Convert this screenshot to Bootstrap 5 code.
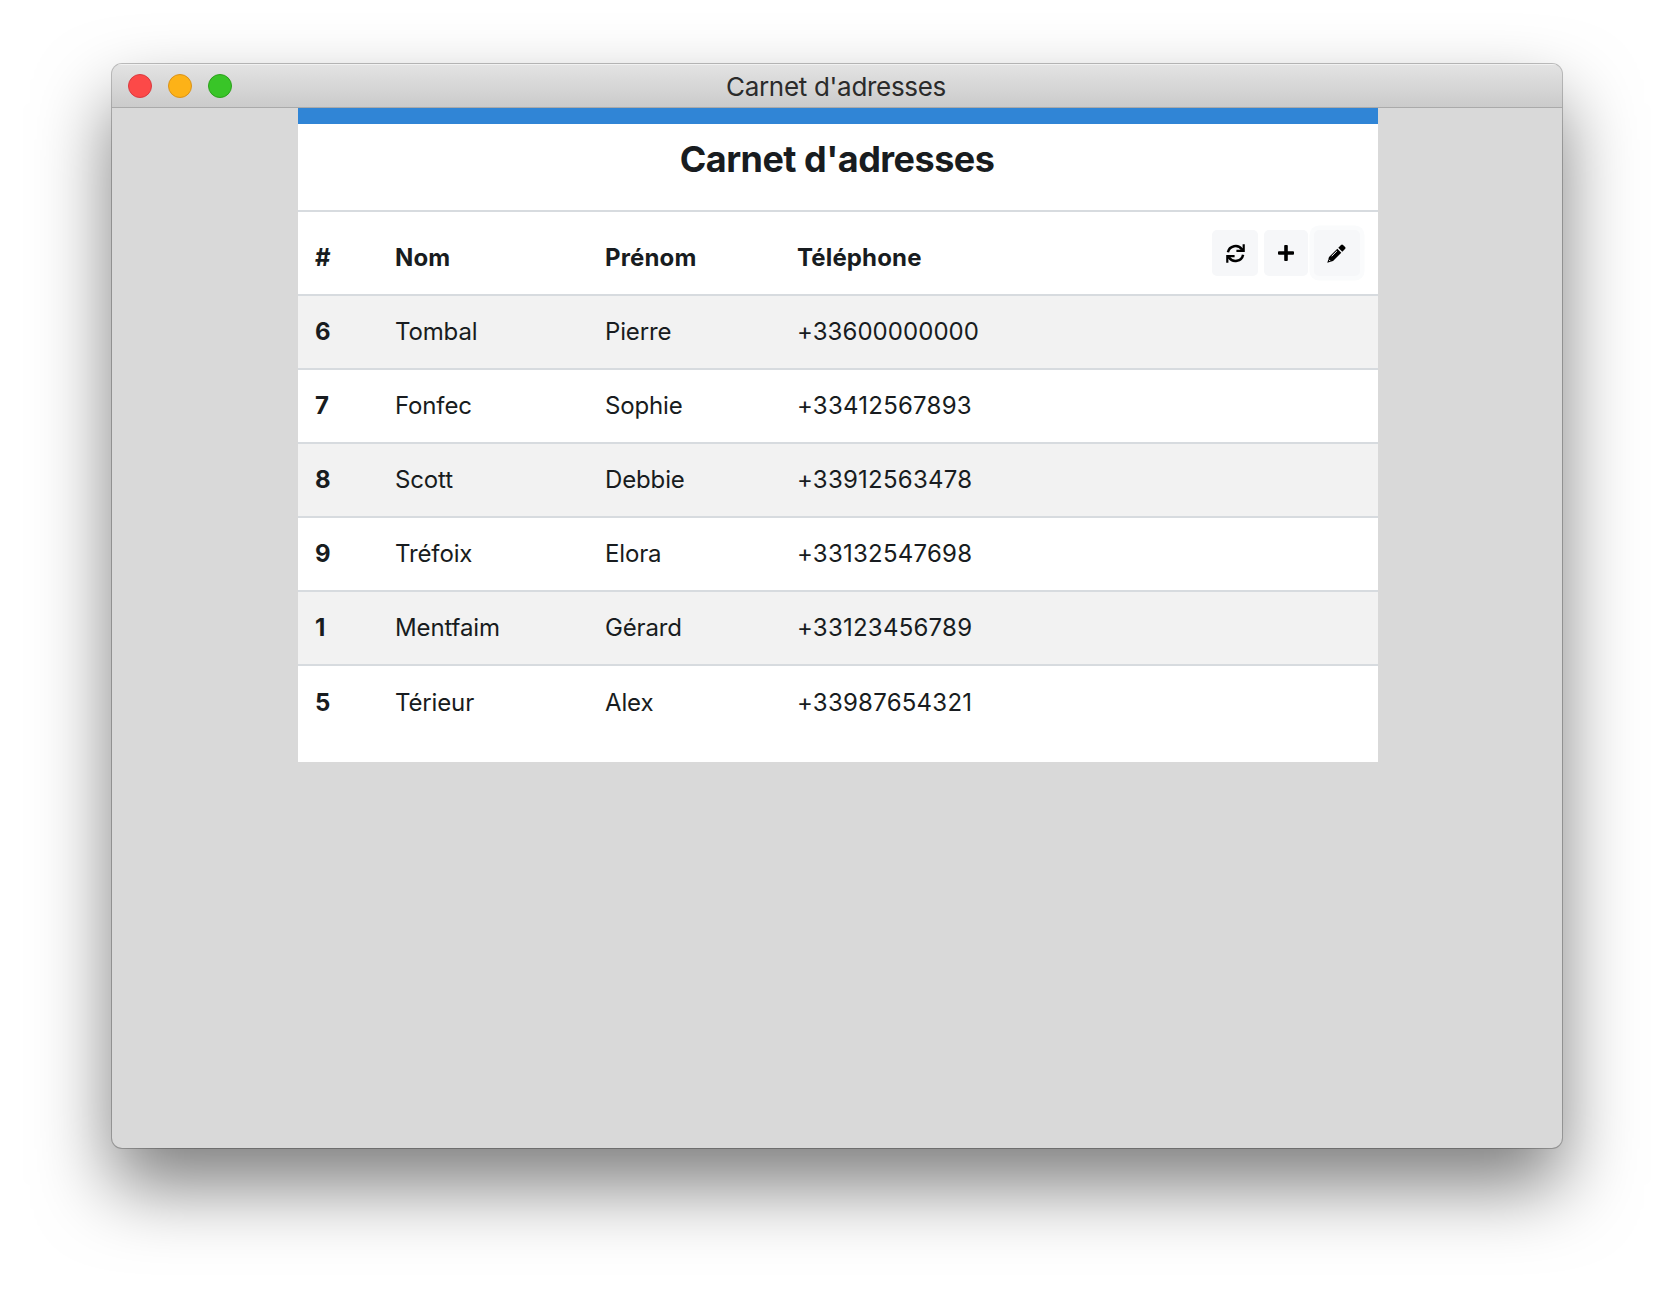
<!DOCTYPE html>
<html lang="fr">
<head>
<meta charset="utf-8">
<title>Carnet d'adresses</title>
<link href="https://cdn.jsdelivr.net/npm/bootstrap@5.3.0/dist/css/bootstrap.min.css" rel="stylesheet">
<style>
body { font-family: Inter, "Liberation Sans", sans-serif; background: #fff; color: #181c20; height: 1308px; overflow: hidden; padding: 64px 112px 0; }
.app-window { width: 1450px; height: 1084px; border-radius: 10px; background: #d9d9d9; box-shadow: 0 0 0 1px rgba(0,0,0,.24), 0 38px 74px rgba(0,0,0,.51); }
.title-bar { height: 44px; padding-left: 16px; background: linear-gradient(#e3e3e3, #cbcbcb); border-bottom: 1px solid #aaa; box-shadow: inset 0 1px 0 #f1f1f1; }
.title-bar .lights { gap: 16px; width: 160px; }
.light-dot { width: 24px; height: 24px; border-radius: 50%; border: 1px solid; }
.dot-close { background: #fc4948; border-color: #d93a40; }
.dot-min { background: #fdb217; border-color: #d9921a; }
.dot-max { background: #39c528; border-color: #2ca01c; }
.window-title { font-size: 26px; color: #2b2b2b; letter-spacing: -.3px; line-height: 42px; padding: 2px 178px 0 0; }
.book { width: 1080px; height: 654px; margin-left: 186px; border-top: 16px solid #3085d6; }
.book-title { height: 86px; padding: 13px 2px 0 0; font-size: 36px; font-weight: 700; line-height: 44px; letter-spacing: -.53px; }
.book-table { table-layout: fixed; font-size: 24px; line-height: 36px; --bs-table-color: #181c20; --bs-table-striped-color: #181c20; --bs-table-striped-bg: #f2f2f2; }
.book-table > * > tr > * { height: 74px; padding: 18px 0 18px 17px; border-bottom: 0; border-top: 2px solid #d7dbdf; letter-spacing: -.14px; vertical-align: middle; }
.book-table > * > tr > .phone { letter-spacing: .24px; }
.book-table > tbody > tr:first-child > .phone { letter-spacing: .06px; }
.book-table > thead > tr > * { height: 84px; padding-top: 28px; padding-bottom: 18px; letter-spacing: .15px; }
.book-table > thead > tr > .tools-cell { padding: 18px 18px 18px 0; }
.tool-btn { width: 46px; height: 46px; padding: 0; border: 0; border-radius: 5px; background: #f6f7f9; color: #000; }
.tool-btn.add { width: 44px; margin: 0 6px; }
.tool-btn.focused { padding-right: 2px; box-shadow: 0 0 0 4.5px #fafbfc; }
</style>
<script src="https://cdn.jsdelivr.net/npm/bootstrap@5.3.0/dist/js/bootstrap.bundle.min.js"></script>
</head>
<body>
<main class="app-window overflow-hidden">
  <header class="title-bar d-flex align-items-center">
    <div class="lights d-flex flex-shrink-0"><span class="light-dot dot-close"></span><span class="light-dot dot-min"></span><span class="light-dot dot-max"></span></div>
    <div class="window-title flex-grow-1 text-center">Carnet d'adresses</div>
  </header>
  <section class="book bg-white">
    <h1 class="book-title text-center mb-0">Carnet d'adresses</h1>
    <table class="table table-striped book-table m-0">
      <colgroup><col style="width:80px"><col style="width:210px"><col style="width:192px"><col style="width:300px"><col></colgroup>
      <thead><tr><th>#</th><th>Nom</th><th>Prénom</th><th>Téléphone</th>
        <th class="tools-cell"><div class="d-flex justify-content-end">
          <button class="btn tool-btn d-flex align-items-center justify-content-center" aria-label="Actualiser"><svg width="19" height="19" viewBox="0 0 19 19" fill="none" stroke="currentColor" stroke-width="2.5"><path d="M1.9 8.3A7.8 7.8 0 0 1 16 5.5M17.1 10.7A7.8 7.8 0 0 1 3 13.5"/><path d="M17.7.3V6.9H10.4M1.3 18.7V12.1H8.6" stroke-width="2.2"/><path d="M14.2 6.5L17.5 3.5V6.5zM4.8 12.5L1.5 15.5V12.5z" fill="currentColor" stroke="none"/></svg></button>
          <button class="btn tool-btn add d-flex align-items-center justify-content-center" aria-label="Ajouter"><svg width="16" height="16" viewBox="0 0 16 16" fill="currentColor"><path d="M7 0h2q.8 0 .8 1v5.2H15q1 0 1 .8v2q0 .8-1 .8H9.800V15q0 1-.8 1H7q-.8 0-.8-1V9.800H1q-1 0-1-.8V7q0-.8 1-.8h5.200V1q0-1 .8-1z"/></svg></button>
          <button class="btn tool-btn focused d-flex align-items-center justify-content-center" aria-label="Modifier"><svg width="19" height="19" viewBox="0 0 19 19" fill="currentColor"><path d="M10.300 4.700L14.300 8.700L6 17L.3 18.700L2 13zM11.300 3.700L14 1Q15 0 16 .9L18.100 3Q19 4 18 5L15.300 7.700z"/><path d="M4.700 12.200L9.900 7M1.900 15.700l1.400 1.400" fill="none" stroke="#f6f7f9" stroke-width="1"/></svg></button>
        </div></th></tr></thead>
      <tbody>
        <tr><th>6</th><td>Tombal</td><td>Pierre</td><td class="phone">+33600000000</td><td></td></tr>
        <tr><th>7</th><td>Fonfec</td><td>Sophie</td><td class="phone">+33412567893</td><td></td></tr>
        <tr><th>8</th><td>Scott</td><td>Debbie</td><td class="phone">+33912563478</td><td></td></tr>
        <tr><th>9</th><td>Tréfoix</td><td>Elora</td><td class="phone">+33132547698</td><td></td></tr>
        <tr><th>1</th><td>Mentfaim</td><td>Gérard</td><td class="phone">+33123456789</td><td></td></tr>
        <tr><th>5</th><td>Térieur</td><td>Alex</td><td class="phone">+33987654321</td><td></td></tr>
      </tbody>
    </table>
  </section>
</main>
</body>
</html>
